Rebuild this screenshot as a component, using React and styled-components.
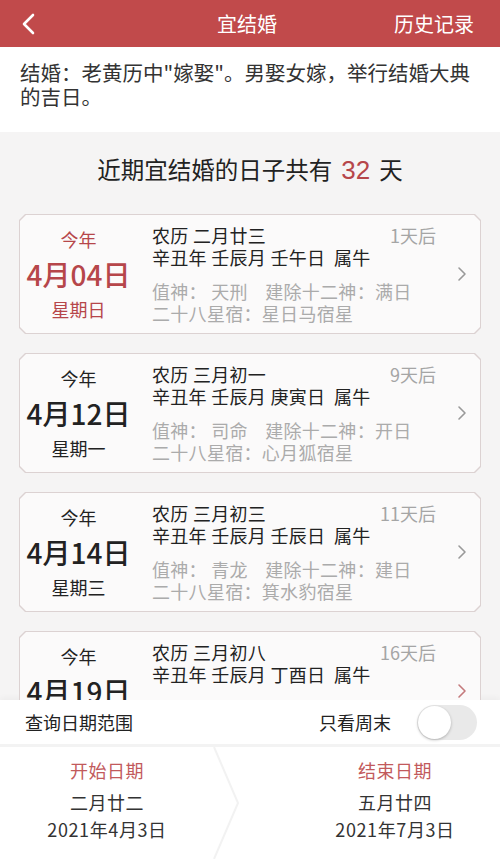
import React from 'react';
import styled, { createGlobalStyle } from 'styled-components';

const GlobalStyle = createGlobalStyle`
  html, body {
    margin: 0;
    padding: 0;
    background: #f5f4f4;
  }
  body {
    font-family: "Noto Sans CJK SC", "Noto Sans", sans-serif;
    color: #222;
  }
  * { box-sizing: border-box; }
`;

const RED = '#b6464a';

/* 页面 */

const Page = styled.div`
  height: 100vh;
  display: flex;
  flex-direction: column;
  overflow: hidden;
  background: #f5f4f4;
`;

/* 顶栏 */

const Header = styled.header`
  height: 47px;
  flex-shrink: 0;
  background: #c14a4b;
  display: grid;
  grid-template-columns: 1fr auto 1fr;
  align-items: center;
  padding: 0 26px 0 20px;
  color: #fff;
  font-size: 20px;
`;

const BackBtn = styled.div`
  display: flex;
  align-items: center;
`;

const Title = styled.h1`
  margin: 0;
  font-size: 20px;
  font-weight: 400;
`;

const HistoryLink = styled.span`
  justify-self: end;
`;

/* 说明 */

const Intro = styled.p`
  margin: 0;
  background: #fff;
  padding: 13px 20px 24px;
  font-size: 20.5px;
  line-height: 24px;
  color: #333;
`;

const Summary = styled.h2`
  margin: 0;
  padding: 22px 0 29px;
  text-align: center;
  font-size: 23.5px;
  line-height: 30px;
  font-weight: 400;
  color: #222;
`;

const Count = styled.span`
  color: ${RED};
  margin: 0 9px;
  font-family: "Liberation Sans", "Noto Sans", sans-serif;
  font-size: 26px;
`;

/* 列表 */

const List = styled.div`
  flex: 1;
  overflow: hidden;
  display: flex;
  flex-direction: column;
  gap: 19px;
  padding: 0 19px;
`;

const chamfer = `polygon(6px 0, calc(100% - 6px) 0, 100% 6px, 100% calc(100% - 6px), calc(100% - 6px) 100%, 6px 100%, 0 calc(100% - 6px), 0 6px)`;

const CardFrame = styled.div`
  flex-shrink: 0;
  height: 120px;
  padding: 1px;
  background: #dcd2d2;
  clip-path: ${chamfer};
`;

const Card = styled.div`
  height: 100%;
  background: #fbfafa;
  clip-path: ${chamfer};
  display: grid;
  grid-template-columns: 117px 1fr 38px;
  align-items: center;
`;

const DateCol = styled.div`
  display: flex;
  flex-direction: column;
  align-items: center;
  color: ${(p) => (p.$active ? RED : '#222')};
`;

const Year = styled.div`
  font-size: 18px;
  line-height: 24px;
`;

const DayNum = styled.div`
  font-size: 28px;
  line-height: 46px;
  font-weight: 500;
`;

const Week = styled.div`
  font-size: 18px;
  line-height: 24px;
`;

const InfoCol = styled.div`
  padding-left: 15px;
  padding-right: 6px;
  display: flex;
  flex-direction: column;
  letter-spacing: 0.3px;
`;

const InfoTop = styled.div`
  display: flex;
  justify-content: space-between;
  font-size: 18px;
  line-height: 22px;
`;

const After = styled.span`
  color: #a5a5a5;
  letter-spacing: 0;
`;

const InfoLine = styled.div`
  font-size: 18px;
  line-height: 22px;
  color: ${(p) => (p.$muted ? '#ababab' : '#222')};
  margin-top: ${(p) => (p.$gap ? '12px' : '0')};
  white-space: pre;
`;

const Arrow = styled.div`
  display: flex;
  justify-content: center;
  padding-left: 2px;
`;

/* 底部 */

const Footer = styled.footer`
  flex-shrink: 0;
  background: #fff;
  box-shadow: 0 -2px 6px rgba(0, 0, 0, 0.04);
`;

const RangeRow = styled.div`
  height: 47px;
  display: flex;
  align-items: center;
  padding: 0 23px 0 25px;
  font-size: 18px;
  border-bottom: 3px solid #f3f3f3;
`;

const RangeLabel = styled.span`
  flex: 1;
`;

const Switch = styled.div`
  margin-left: 26px;
  width: 60px;
  height: 35px;
  border-radius: 18px;
  background: #e9e9e9;
  position: relative;
`;

const Knob = styled.div`
  position: absolute;
  left: 1px;
  top: 1px;
  width: 33px;
  height: 33px;
  border-radius: 50%;
  background: #fff;
  box-shadow: 0 1px 3px rgba(0, 0, 0, 0.25);
`;

const DatesRow = styled.div`
  height: 112px;
  display: grid;
  grid-template-columns: 1fr 60px 1fr;
`;

const DateBlock = styled.div`
  display: flex;
  flex-direction: column;
  align-items: center;
  padding-top: 11px;
  padding-left: ${(p) => (p.$side === 'left' ? '0' : '10px')};
  padding-right: ${(p) => (p.$side === 'left' ? '6px' : '0')};
`;

const DateLabel = styled.div`
  color: #c25a5c;
  font-size: 18px;
  line-height: 24px;
  letter-spacing: 0.5px;
`;

const Lunar = styled.div`
  font-size: 18px;
  line-height: 24px;
  margin-top: 8px;
  color: #333;
  letter-spacing: 0.5px;
`;

const Solar = styled.div`
  font-size: 18px;
  line-height: 24px;
  margin-top: 3px;
  color: #333;
  letter-spacing: 0.6px;
`;

const Divider = styled.div`
  display: flex;
  align-items: center;
  margin-left: -10px;
`;

const ChevronRight = ({ color = '#999' }) => (
  <svg width="12" height="16" viewBox="0 0 12 16">
    <polyline points="3,2 9,8 3,14" fill="none" stroke={color} strokeWidth="1.6" strokeLinecap="round" strokeLinejoin="round" />
  </svg>
);

const days = [
  {
    active: true,
    date: '4月04日',
    week: '星期日',
    lunar: '农历 二月廿三',
    after: '1天后',
    gz: '辛丑年 壬辰月 壬午日  属牛',
    god: '值神： 天刑    建除十二神：满日',
    star: '二十八星宿：星日马宿星',
    arrow: '#999',
  },
  {
    date: '4月12日',
    week: '星期一',
    lunar: '农历 三月初一',
    after: '9天后',
    gz: '辛丑年 壬辰月 庚寅日  属牛',
    god: '值神： 司命    建除十二神：开日',
    star: '二十八星宿：心月狐宿星',
    arrow: '#999',
  },
  {
    date: '4月14日',
    week: '星期三',
    lunar: '农历 三月初三',
    after: '11天后',
    gz: '辛丑年 壬辰月 壬辰日  属牛',
    god: '值神： 青龙    建除十二神：建日',
    star: '二十八星宿：箕水豹宿星',
    arrow: '#999',
  },
  {
    date: '4月19日',
    week: '星期一',
    lunar: '农历 三月初八',
    after: '16天后',
    gz: '辛丑年 壬辰月 丁酉日  属牛',
    god: '值神： 明堂    建除十二神：定日',
    star: '二十八星宿：翼火蛇宿星',
    arrow: '#c47a7c',
  },
];

export default function App() {
  return (
    <Page>
      <GlobalStyle />
      <Header>
        <BackBtn>
          <svg width="18" height="22" viewBox="0 0 18 22">
            <polyline points="13,2 4,11 13,20" fill="none" stroke="#fff" strokeWidth="2.6" strokeLinecap="round" strokeLinejoin="round" />
          </svg>
        </BackBtn>
        <Title>宜结婚</Title>
        <HistoryLink>历史记录</HistoryLink>
      </Header>

      <Intro>结婚：老黄历中"嫁娶"。男娶女嫁，举行结婚大典的吉日。</Intro>

      <Summary>
        近期宜结婚的日子共有<Count>32</Count>天
      </Summary>

      <List>
        {days.map((d) => (
          <CardFrame key={d.date}>
            <Card>
              <DateCol $active={d.active}>
                <Year>今年</Year>
                <DayNum>{d.date}</DayNum>
                <Week>{d.week}</Week>
              </DateCol>
              <InfoCol>
                <InfoTop>
                  <span>{d.lunar}</span>
                  <After>{d.after}</After>
                </InfoTop>
                <InfoLine>{d.gz}</InfoLine>
                <InfoLine $muted $gap>{d.god}</InfoLine>
                <InfoLine $muted>{d.star}</InfoLine>
              </InfoCol>
              <Arrow>
                <ChevronRight color={d.arrow} />
              </Arrow>
            </Card>
          </CardFrame>
        ))}
      </List>

      <Footer>
        <RangeRow>
          <RangeLabel>查询日期范围</RangeLabel>
          <span>只看周末</span>
          <Switch>
            <Knob />
          </Switch>
        </RangeRow>
        <DatesRow>
          <DateBlock $side="left">
            <DateLabel>开始日期</DateLabel>
            <Lunar>二月廿二</Lunar>
            <Solar>2021年4月3日</Solar>
          </DateBlock>
          <Divider>
            <svg width="32" height="112" viewBox="0 0 32 112">
              <polyline points="4,0 28,56 4,112" fill="none" stroke="#f2f2f2" strokeWidth="2" />
            </svg>
          </Divider>
          <DateBlock $side="right">
            <DateLabel>结束日期</DateLabel>
            <Lunar>五月廿四</Lunar>
            <Solar>2021年7月3日</Solar>
          </DateBlock>
        </DatesRow>
      </Footer>
    </Page>
  );
}
